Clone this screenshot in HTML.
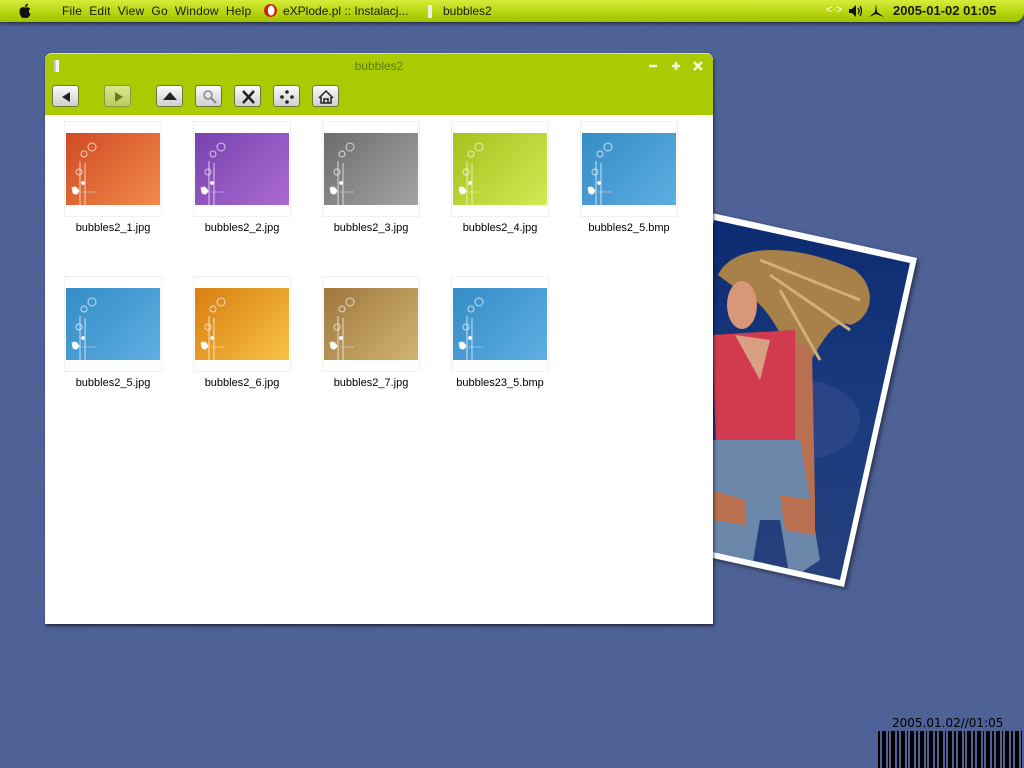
<!DOCTYPE html>
<html><head><meta charset="utf-8"><style>
*{margin:0;padding:0;box-sizing:border-box}
body{width:1024px;height:768px;overflow:hidden;position:relative;font-family:"Liberation Sans","DejaVu Sans",sans-serif;
background:#4b5f95 repeating-linear-gradient(135deg,rgba(255,255,255,0.05) 0 1px,rgba(0,0,0,0) 1px 3px);}
#menubar{position:absolute;left:0;top:0;width:1024px;height:22px;background:linear-gradient(#d6ec3a,#b4d40e 60%,#a2c000);border-bottom-right-radius:10px;box-shadow:0 2px 3px rgba(0,0,0,.5);font-family:"Liberation Sans",sans-serif;font-size:12px;color:#1a1a00}
#menubar span{position:absolute;top:4px;white-space:nowrap}
.win{position:absolute;left:45px;top:53px;width:668px;height:571px;background:#fff;border-radius:7px 7px 0 0;box-shadow:1px 2px 3px rgba(0,0,0,.6)}
.tb{position:absolute;left:0;top:0;width:668px;height:62px;background:#aacb02;border-radius:7px 7px 0 0;border-top:1px solid #d8ee70}
.btn{position:absolute;top:31px;width:27px;height:22px;border:1px solid #6a7a30;border-radius:3px;background:linear-gradient(#fafafa,#cfcfcf);}
.btn svg{position:absolute;left:0;top:0}
.th{position:absolute;width:98px;height:96px;border:1px solid #f0f0f0}
.th div{position:absolute;left:1px;top:11px;width:94px;height:72px;overflow:hidden}
.th svg{position:absolute;left:0;top:0}
.lbl{position:absolute;width:130px;text-align:center;font-size:11px;color:#000}
</style></head><body>
<div id="menubar">
<svg style="position:absolute;left:17px;top:3px" width="16" height="16" viewBox="0 0 16 16"><path d="M8,4.5 C6,3.5 2.5,4 2.5,8.5 C2.5,12 5,15.5 6.5,15 C7.5,14.6 8.5,14.6 9.5,15 C11,15.5 13,12.5 13.5,11 C11.5,10 11.3,7 13.2,5.8 C12,4 10,4 8,4.5 Z M8,4 C8,2 9.5,0.8 11,0.6 C11,2.5 9.5,4 8,4 Z" fill="#111"/></svg>
<span style="left:62px;letter-spacing:.2px">File&nbsp; Edit&nbsp; View&nbsp; Go&nbsp; Window&nbsp; Help</span>
<span style="left:264px;top:4px;width:13px;height:13px;border-radius:50%;background:radial-gradient(ellipse 30% 45% at 55% 50%,#fff 0 80%,#d02000 90%);"></span>
<span style="left:283px">eXPlode.pl :: Instalacj...</span>
<span style="left:428px;width:4px;height:13px;background:#eee;top:5px"></span>
<span style="left:443px">bubbles2</span>
<span style="left:826px;color:#fff;font-size:11px">&lt;·&gt;</span>
<svg style="position:absolute;left:848px;top:4px" width="18" height="14"><polygon points="1,5 4,5 8,1 8,13 4,9 1,9" fill="#111"/><path d="M10,4 Q12,7 10,10 M12,2 Q15,7 12,12" stroke="#111" stroke-width="1.3" fill="none"/></svg>
<svg style="position:absolute;left:867px;top:3px" width="18" height="16"><path d="M9,1 L10,9 L17,14 L9,11 L2,14 L8,9 Z" fill="#111"/></svg>
<span style="left:893px;font-size:13px;top:3px;font-weight:bold">2005-01-02 01:05</span>
</div>

<svg style="position:absolute;left:0;top:0" width="1024" height="768">
<polygon points="712,213 917,258 844,587 640,542" fill="#fff" style="filter:drop-shadow(2px 2px 2px rgba(0,0,0,.5))"/>
<defs><clipPath id="cp"><polygon points="714,220 910,263 840,580 645,537"/></clipPath>
<linearGradient id="sky" x1="0" y1="0" x2="0" y2="1"><stop offset="0" stop-color="#0c2a70"/><stop offset=".6" stop-color="#1c3c80"/><stop offset="1" stop-color="#26407a"/></linearGradient></defs>
<g clip-path="url(#cp)">
<rect x="640" y="210" width="280" height="380" fill="url(#sky)"/>
<ellipse cx="800" cy="420" rx="60" ry="40" fill="#3a5090" opacity=".5"/>
<path d="M718,275 C735,240 800,245 855,270 C880,290 870,320 850,325 C830,315 815,360 800,375 C785,340 765,300 745,295 Z" fill="#a8804a"/>
<path d="M760,260 L860,300 M770,275 L850,330 M780,290 L820,360" stroke="#d0b078" stroke-width="3"/>
<ellipse cx="742" cy="305" rx="15" ry="24" fill="#d89878"/>
<path d="M712,335 L795,330 L800,440 L716,445 Z" fill="#d23a50"/>
<path d="M735,335 L770,340 L760,380 Z" fill="#d8a080"/>
<path d="M795,340 L812,350 L815,500 L795,510 Z" fill="#b87050"/>
<path d="M712,440 L800,440 L820,560 L790,580 L780,520 L760,520 L750,580 L712,580 Z" fill="#6a86a8"/>
<path d="M712,490 L745,500 L745,525 L712,520 Z" fill="#b87050"/>
<path d="M780,495 L815,500 L815,535 L785,530 Z" fill="#b87050"/>
</g>
</svg>

<div class="win">
<div class="tb">
<div style="position:absolute;left:9px;top:6px;width:5px;height:12px;background:#f4f4f4;border-left:2px solid #ccc"></div>
<div style="position:absolute;left:0;width:668px;top:5px;text-align:center;font-size:12px;color:#5f7a08">bubbles2</div>
<svg style="position:absolute;left:602px;top:6px" width="60" height="12"><path d="M2,6 H10" stroke="#f4f4e0" stroke-width="2.5"/><path d="M25,6 H33 M29,2 V10" stroke="#f4f4e0" stroke-width="2.5"/><path d="M47,2 L55,10 M55,2 L47,10" stroke="#f4f4e0" stroke-width="2.5"/></svg>
<div class="btn" style="left:7px"><svg width="27" height="22"><polygon points="9,11 17,6 17,16" fill="#222"/></svg></div>
<div class="btn" style="left:59px;background:linear-gradient(#d8e890,#b8cc60);border-color:#8a9a40"><svg width="27" height="22"><polygon points="18,11 10,6 10,16" fill="#6a7a20"/></svg></div>
<div class="btn" style="left:111px"><svg width="27" height="22"><polygon points="13,6 20,14 6,14" fill="#222"/></svg></div>
<div class="btn" style="left:150px"><svg width="27" height="22"><circle cx="12" cy="9" r="4" fill="none" stroke="#888" stroke-width="1.5"/><line x1="15" y1="12" x2="20" y2="17" stroke="#888" stroke-width="2"/></svg></div>
<div class="btn" style="left:189px"><svg width="27" height="22"><path d="M8,5 L19,17 M19,5 L8,17" stroke="#222" stroke-width="2.5"/></svg></div>
<div class="btn" style="left:228px"><svg width="27" height="22"><circle cx="13" cy="6" r="1.8" fill="#222"/><circle cx="13" cy="16" r="1.8" fill="#222"/><circle cx="8" cy="11" r="1.8" fill="#222"/><circle cx="18" cy="11" r="1.8" fill="#222"/></svg></div>
<div class="btn" style="left:267px"><svg width="27" height="22"><path d="M6,12 L13,5 L20,12 M8,11 V17 H18 V11 M11,17 V13 H15 V17" fill="none" stroke="#222" stroke-width="1.5"/></svg></div>
</div>
</div>

<svg width="0" height="0" style="position:absolute"><defs><g id="bb" fill="none" stroke="rgba(255,255,255,.7)" stroke-width="1"><circle cx="26" cy="14" r="4"/><circle cx="18" cy="21" r="3"/><circle cx="13" cy="39" r="3"/><line x1="14" y1="28" x2="14" y2="72"/><line x1="19" y1="30" x2="19" y2="72"/><circle cx="17" cy="50" r="1.5" fill="#fff"/><path d="M6,55 Q10,52 13,58 Q11,63 7,60 Z" fill="#fff"/><line x1="16" y1="59" x2="30" y2="59" stroke-dasharray="1 1"/></g></defs></svg>

<div style="position:absolute;left:0;top:0">
<div class="th" style="left:64px;top:121px"><div style="background:linear-gradient(135deg,#cf4a24,#f28a4a)"><svg width="94" height="72"><use href="#bb"/></svg></div></div>
<div class="th" style="left:193px;top:121px"><div style="background:linear-gradient(135deg,#7842ae,#aa6ad2)"><svg width="94" height="72"><use href="#bb"/></svg></div></div>
<div class="th" style="left:322px;top:121px"><div style="background:linear-gradient(135deg,#6c6c6c,#a4a4a4)"><svg width="94" height="72"><use href="#bb"/></svg></div></div>
<div class="th" style="left:451px;top:121px"><div style="background:linear-gradient(135deg,#a6c01c,#d2ea54)"><svg width="94" height="72"><use href="#bb"/></svg></div></div>
<div class="th" style="left:580px;top:121px"><div style="background:linear-gradient(135deg,#358cc6,#5eaee2)"><svg width="94" height="72"><use href="#bb"/></svg></div></div>
<div class="th" style="left:64px;top:276px"><div style="background:linear-gradient(135deg,#358cc6,#5eaee2)"><svg width="94" height="72"><use href="#bb"/></svg></div></div>
<div class="th" style="left:193px;top:276px"><div style="background:linear-gradient(135deg,#d67e12,#f8c244)"><svg width="94" height="72"><use href="#bb"/></svg></div></div>
<div class="th" style="left:322px;top:276px"><div style="background:linear-gradient(135deg,#9e763e,#d2b472)"><svg width="94" height="72"><use href="#bb"/></svg></div></div>
<div class="th" style="left:451px;top:276px"><div style="background:linear-gradient(135deg,#358cc6,#5eaee2)"><svg width="94" height="72"><use href="#bb"/></svg></div></div>
<div class="lbl" style="left:48px;top:222px">bubbles2_1.jpg</div>
<div class="lbl" style="left:177px;top:222px">bubbles2_2.jpg</div>
<div class="lbl" style="left:306px;top:222px">bubbles2_3.jpg</div>
<div class="lbl" style="left:435px;top:222px">bubbles2_4.jpg</div>
<div class="lbl" style="left:564px;top:222px">bubbles2_5.bmp</div>
<div class="lbl" style="left:48px;top:377px">bubbles2_5.jpg</div>
<div class="lbl" style="left:177px;top:377px">bubbles2_6.jpg</div>
<div class="lbl" style="left:306px;top:377px">bubbles2_7.jpg</div>
<div class="lbl" style="left:435px;top:377px">bubbles23_5.bmp</div>
</div>

<div style="position:absolute;left:892px;top:716px;font-family:'DejaVu Sans',sans-serif;font-size:12px;color:#000">2005.01.02//01:05</div>
<div style="position:absolute;left:878px;top:731px;width:146px;height:37px;background:repeating-linear-gradient(90deg,#000 0 2px,transparent 2px 4px,#000 4px 8px,transparent 8px 10px,#000 10px 11px,transparent 11px 13px,#000 13px 17px,transparent 17px 19px)"></div>
</body></html>
